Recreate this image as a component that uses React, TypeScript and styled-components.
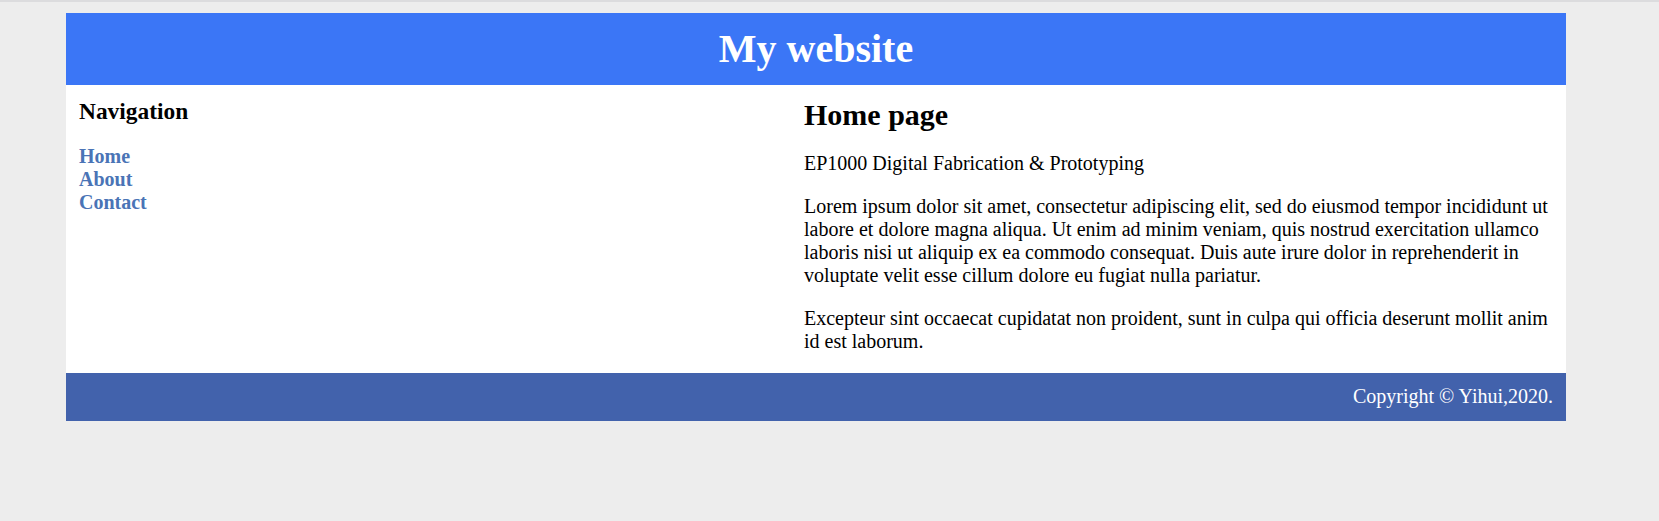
import React from "react";
import styled, { createGlobalStyle } from "styled-components";

const GlobalStyle = createGlobalStyle`
  html, body {
    margin: 0;
    padding: 0;
  }
  body {
    background: #ededed;
    border-top: 2px solid #dcdcde;
    font-family: "Liberation Serif", "Times New Roman", serif;
    font-size: 20px;
    color: #000;
  }
`;

const Page = styled.div`
  width: 1500px;
  margin: 11px 0 0 66px;
`;

const Header = styled.header`
  background: #3b76f6;
  padding: 13px 0;
  text-align: center;
`;

const Title = styled.h1`
  margin: 0;
  font-size: 40px;
  font-weight: bold;
  color: #ffffff;
  line-height: 46px;
`;

const Main = styled.main`
  display: grid;
  grid-template-columns: 725px 1fr;
  background: #ffffff;
`;

const Sidebar = styled.nav`
  padding: 13px 13px 0 13px;
`;

const SideHeading = styled.h3`
  margin: 0 0 20px;
  font-size: 23.4px;
  font-weight: bold;
  line-height: 27px;
`;

const NavList = styled.div`
  display: flex;
  flex-direction: column;
`;

const NavLink = styled.a`
  font-weight: bold;
  color: #4a74b6;
  text-decoration: none;
  line-height: 23px;
`;

const Content = styled.section`
  padding: 12px 12px 0 13px;
`;

const PageHeading = styled.h2`
  margin: 0 0 20px;
  font-size: 30px;
  font-weight: bold;
  line-height: 35px;
`;

const Para = styled.p`
  margin: 0 0 20px;
  line-height: 23px;
`;

const Footer = styled.footer`
  background: #4262ac;
  color: #ffffff;
  text-align: right;
  padding: 12px 13px 13px;
  line-height: 23px;
`;

export default function App() {
  return (
    <>
      <GlobalStyle />
      <Page>
        <Header>
          <Title>My website</Title>
        </Header>
        <Main>
          <Sidebar>
            <SideHeading>Navigation</SideHeading>
            <NavList>
              <NavLink href="#">Home</NavLink>
              <NavLink href="#">About</NavLink>
              <NavLink href="#">Contact</NavLink>
            </NavList>
          </Sidebar>
          <Content>
            <PageHeading>Home page</PageHeading>
            <Para>EP1000 Digital Fabrication &amp; Prototyping</Para>
            <Para>
              Lorem ipsum dolor sit amet, consectetur adipiscing elit, sed do eiusmod tempor incididunt ut
              labore et dolore magna aliqua. Ut enim ad minim veniam, quis nostrud exercitation ullamco
              laboris nisi ut aliquip ex ea commodo consequat. Duis aute irure dolor in reprehenderit in
              voluptate velit esse cillum dolore eu fugiat nulla pariatur.
            </Para>
            <Para>
              Excepteur sint occaecat cupidatat non proident, sunt in culpa qui officia deserunt mollit anim
              id est laborum.
            </Para>
          </Content>
        </Main>
        <Footer>Copyright © Yihui,2020.</Footer>
      </Page>
    </>
  );
}
